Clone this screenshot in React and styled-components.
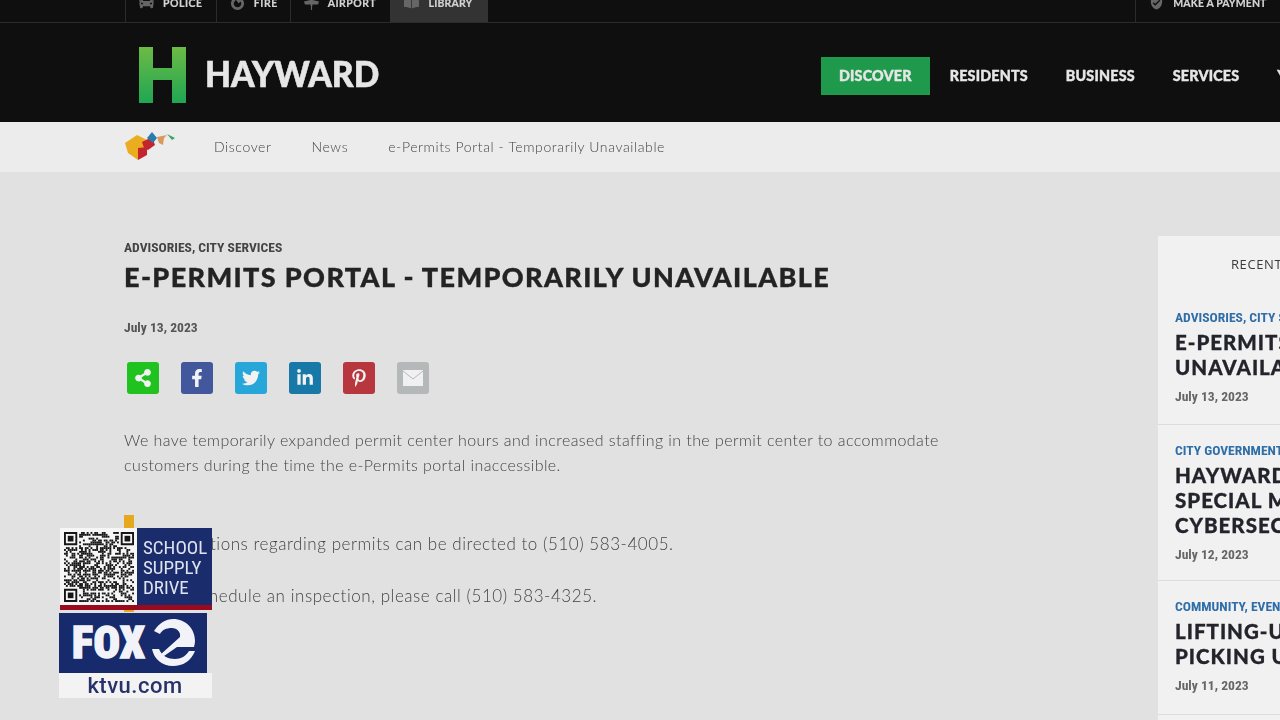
import React from "react";
import styled, { createGlobalStyle } from "styled-components";
import { FaShareAlt, FaFacebookF, FaTwitter, FaLinkedinIn, FaPinterestP, FaCar, FaBookOpen, FaFireAlt } from "react-icons/fa";
import { MdVerifiedUser } from "react-icons/md";

const Global = createGlobalStyle`
  html, body { margin: 0; padding: 0; height: 720px; overflow: hidden; background: #e1e1e1; }
  * { box-sizing: border-box; }
`;

const condensed = `"Roboto Condensed", "Liberation Sans Narrow", Roboto, sans-serif`;

const Page = styled.div`
  position: relative; width: 1280px; height: 720px; overflow: hidden;
  background: #e1e1e1; font-family: Lato, "Open Sans", sans-serif;
`;
const Site = styled.div`filter: blur(0.45px);`;

const TopBar = styled.div`
  display: flex; height: 23px; padding-left: 125px; background: #0f0f0f; border-bottom: 1px solid #2b2b2b;
`;
const TopItem = styled.div`
  display: flex; align-items: center; gap: 9px; height: 22px; width: ${p => p.$w}px; padding: 0 0 17px 13px;
  border-left: 1px solid ${p => (p.$active ? "transparent" : "#2b2b2b")};
  background: ${p => (p.$active ? "#333" : "transparent")};
  color: #d4d4d4; font-size: 10.5px; font-weight: 700; letter-spacing: ${p => p.$ls ?? 0.5}px; white-space: nowrap;
  -webkit-text-stroke: 0.2px #d4d4d4;
  svg { width: 15px; height: 15px; color: #666; flex: none; }
`;
const TopSpacer = styled.div`flex: 0 0 647px;`;

const Header = styled.header`
  display: flex; align-items: center; height: 99px; padding-left: 139px; background: #0f0f0f;
`;
const Brand = styled.div`
  display: flex; align-items: center; gap: 19px; flex: 0 0 682px; padding-top: 4px;
`;
const Word = styled.span`
  color: #e6e6e6; font-size: 36px; font-weight: 900; letter-spacing: 0; line-height: 1; margin-top: -3px;
  -webkit-text-stroke: 0.6px #e6e6e6; display: inline-block; transform: scaleX(0.935); transform-origin: left center;
`;
const Nav = styled.nav`
  display: flex; align-items: center; gap: 2px; flex: none; margin-top: 7px;
`;
const NavLink = styled.a`
  display: block; height: 38px; line-height: 38px; padding: 0 18px;
  background: ${p => (p.$active ? "#1f9a4d" : "transparent")};
  color: #e6e6e6; font-size: 14.3px; font-weight: 900; letter-spacing: 0.2px; white-space: nowrap;
  -webkit-text-stroke: 0.4px #e6e6e6;
`;

const Crumbs = styled.div`
  display: flex; align-items: center; height: 50px; padding: 0 0 1px 125px; background: #ececec;
  font-size: 14px; font-weight: 300; letter-spacing: 0.6px; color: #444;
`;
const CrumbArt = styled.svg`width: 52px; height: 32px; margin-right: 37px; flex: none;`;
const Crumb = styled.span`margin-right: 40px; white-space: nowrap;`;

const Body = styled.div`display: flex; padding-top: 64px; height: 548px;`;
const Main = styled.main`flex: 0 0 1158px; min-width: 0; padding: 3px 0 0 124px;`;
const Category = styled.div`
  font-family: ${condensed}; font-stretch: 75%;
  font-size: 13.6px; font-weight: 700; color: #444; line-height: 16px; white-space: nowrap;
`;
const Title = styled.h1`
  margin: 5px 0 0; font-size: 27px; line-height: 34px; font-weight: 900; color: #232323;
  letter-spacing: 1.38px; white-space: nowrap; -webkit-text-stroke: 0.35px #232323;
`;
const DateLine = styled.div`
  margin-top: 25px; font-family: ${condensed}; font-stretch: 75%;
  font-size: 13.6px; font-weight: 700; color: #555; line-height: 16px;
`;
const Share = styled.div`display: flex; gap: 22px; margin: 27px 0 0 3px;`;
const ShareBtn = styled.a`
  display: flex; align-items: center; justify-content: center; width: 32px; height: 32px; border-radius: 3px;
  background: ${p => p.$bg}; color: #f2f2f2; font-size: 18px;
`;
const Para = styled.p`
  margin: 33px 0 0; width: 830px; font-size: 16px; line-height: 25px; color: #444; letter-spacing: 0.42px; font-weight: 300;
`;
const List = styled.ul`
  position: relative; list-style: none; margin: 54px 0 0; padding: 0; width: 830px;
  &::before { content: ""; position: absolute; left: 0; top: -16px; width: 10px; height: 97px; background: #e6a81f; }
`;
const Item = styled.li`
  margin-bottom: 27px; padding-left: 45px; font-size: 17px; line-height: 25px; color: #444; letter-spacing: 0.55px; font-weight: 300; white-space: nowrap;
`;

const Side = styled.aside`flex: 0 0 330px; background: #f1f1f1; height: 484px;`;
const SideHead = styled.div`
  height: 62px; padding: 20px 0 0 73px; font-size: 13px; line-height: 16px; color: #3a3a3a; letter-spacing: 0.6px;
  font-family: "Open Sans", sans-serif; white-space: nowrap;
`;
const Card = styled.article`
  height: ${p => p.$h}px; padding: ${p => p.$pt}px 0 0 17px; border-bottom: 1px solid #dcdcdc; white-space: nowrap;
`;
const CardCat = styled.div`
  font-family: ${condensed}; font-stretch: 75%;
  font-size: 13.6px; font-weight: 700; line-height: 16px; color: #2f6ea8;
`;
const CardTitle = styled.div`
  margin-top: 5px; font-size: 20.5px; line-height: 25px; font-weight: 900; color: #23232b; letter-spacing: 1px;
  -webkit-text-stroke: 0.3px #23232b;
`;
const CardDate = styled.div`
  margin-top: 8px; font-family: ${condensed}; font-stretch: 75%;
  font-size: 13.6px; font-weight: 700; line-height: 16px; color: #666;
`;

const Promo = styled.div`position: absolute; left: 59px; top: 528px; width: 153px;`;
const QrBox = styled.div`display: flex; margin-left: 1px; height: 77px;`;
const QrWhite = styled.div`flex: 0 0 77px; background: #f6f6f6; padding: 4px 3px 4px 4px;`;
const QrSvg = styled.svg`display: block; width: 70px; height: 70px;`;
const Drive = styled.div`
  flex: 1; min-width: 0; background: #1a2c6b; color: #dfe3ef; padding: 10px 0 0 6px;
  font-family: ${condensed}; font-stretch: 75%; font-size: 19px; line-height: 20px; white-space: nowrap;
`;
const RedLine = styled.div`height: 5px; margin-left: 1px; background: #9a0a1e;`;
const Fox = styled.div`
  position: relative; width: 148px; height: 60px; margin-top: 3px; padding: 7px 0 0 13px; background: #172a6b;
`;
const FoxText = styled.span`
  font-family: ${condensed}; font-stretch: 75%; font-weight: 900; font-size: 44px; color: #f1f3f8; line-height: 46px;
  -webkit-text-stroke: 1.5px #f1f3f8; letter-spacing: 0.5px;
`;
const FoxTwo = styled.svg`position: absolute; left: 91px; top: 5px; width: 46px; height: 49px;`;
const Ktvu = styled.div`
  height: 25px; background: #f3f3f3; color: #27326a; text-align: center; padding-right: 1px;
  font-family: Roboto, "Liberation Sans", sans-serif; font-size: 22px; line-height: 26px; font-weight: 500; letter-spacing: 0.5px;
`;

const QR_N = 37;
function qrCells() {
  const n = QR_N; const out = [];
  const inF = (x, y, fx, fy) => x >= fx - 1 && x <= fx + 7 && y >= fy - 1 && y <= fy + 7;
  let s = 12345;
  for (let y = 0; y < n; y++) for (let x = 0; x < n; x++) {
    s = (s * 1103515245 + 12345) & 0x7fffffff;
    if (inF(x, y, 0, 0) || inF(x, y, n - 7, 0) || inF(x, y, 0, n - 7)) continue;
    if ((s >> 16) % 100 < 50) out.push([x, y]);
  }
  return out;
}
const Finder = ({ x, y }) => (
  <g>
    <path d={`M${x} ${y}h7v7h-7z M${x + 1} ${y + 1}v5h5v-5z`} fillRule="evenodd" />
    <rect x={x + 2} y={y + 2} width="3" height="3" />
  </g>
);
const Qr = () => (
  <QrSvg viewBox={`0 0 ${QR_N} ${QR_N}`} fill="#161616">
    <Finder x={0} y={0} /><Finder x={QR_N - 7} y={0} /><Finder x={0} y={QR_N - 7} />
    {qrCells().map(([x, y]) => <rect key={x + "-" + y} x={x} y={y} width="1" height="1" />)}
  </QrSvg>
);
const TowerIcon = () => (
  <svg viewBox="0 0 16 16" fill="currentColor">
    <path d="M0 7l8-2 8 2-1 3H9l-.4 3v3H7.400v-3L7 10H1z" />
  </svg>
);

const tops = [
  { w: 91, icon: <FaCar />, label: "POLICE" },
  { w: 74, icon: <FaFireAlt />, label: "FIRE" },
  { w: 101, icon: <TowerIcon />, label: "AIRPORT" },
  { w: 98, icon: <FaBookOpen />, label: "LIBRARY", active: true, ls: 0.2 },
];
const cards = [
  { h: 127, pt: 11, cat: "ADVISORIES, CITY SERVICES", t: ["E-PERMITS PORTAL - TEMPORARILY", "UNAVAILABLE"], d: "July 13, 2023" },
  { h: 156, pt: 17, cat: "CITY GOVERNMENT, NEWS", t: ["HAYWARD CITY COUNCIL", "SPECIAL MEETING ON", "CYBERSECURITY"], d: "July 12, 2023" },
  { h: 134, pt: 17, cat: "COMMUNITY, EVENTS", t: ["LIFTING-UP HAYWARD:", "PICKING UP LITTER"], d: "July 11, 2023" },
];

export default function App() {
  return (
    <Page>
      <Global />
      <Site>
        <TopBar>
          {tops.map(t => (
            <TopItem key={t.label} $w={t.w} $active={t.active} $ls={t.ls}>{t.icon}{t.label}</TopItem>
          ))}
          <TopSpacer />
          <TopItem $w={145} $ls={0.1}><MdVerifiedUser />MAKE A PAYMENT</TopItem>
        </TopBar>
        <Header>
          <Brand>
            <svg width="47" height="56" viewBox="0 0 47 56">
              <defs>
                <linearGradient id="hg" x1="0" y1="0" x2="0" y2="1">
                  <stop offset="0" stopColor="#6cbb45" />
                  <stop offset="1" stopColor="#1fa653" />
                </linearGradient>
              </defs>
              <path fill="url(#hg)" d="M0 0h14v21h19V0h14v56H33V33H14v23H0z" />
            </svg>
            <Word>HAYWARD</Word>
          </Brand>
          <Nav>
            <NavLink $active>DISCOVER</NavLink>
            <NavLink>RESIDENTS</NavLink>
            <NavLink>BUSINESS</NavLink>
            <NavLink>SERVICES</NavLink>
            <NavLink>YOUR CITY HALL</NavLink>
          </Nav>
        </Header>
        <Crumbs>
          <CrumbArt viewBox="0 0 52 32">
            <path fill="#e9ad1f" d="M0 12L12 4l10 5-9 20-10-7z" />
            <path fill="#c3242e" d="M13 17l9-1v8l-9 5z" />
            <path fill="#c3242e" d="M17 11l10-5 3 8-7 5-4-2z" />
            <path fill="#2a7ab0" d="M22 7l5-6 5 6-4 5z" />
            <path fill="#d9995b" d="M32 6l10-2-3 3-1 7-4-2z" />
            <path fill="#3aa55b" d="M42 3l8 4-3 2z" />
          </CrumbArt>
          <Crumb>Discover</Crumb>
          <Crumb>News</Crumb>
          <Crumb>e-Permits Portal - Temporarily Unavailable</Crumb>
        </Crumbs>
        <Body>
          <Main>
            <Category>ADVISORIES, CITY SERVICES</Category>
            <Title>E-PERMITS PORTAL - TEMPORARILY UNAVAILABLE</Title>
            <DateLine>July 13, 2023</DateLine>
            <Share>
              <ShareBtn $bg="#1fc21f"><FaShareAlt /></ShareBtn>
              <ShareBtn $bg="#43589c"><FaFacebookF /></ShareBtn>
              <ShareBtn $bg="#27a6da"><FaTwitter /></ShareBtn>
              <ShareBtn $bg="#1878a8"><FaLinkedinIn /></ShareBtn>
              <ShareBtn $bg="#b8373f"><FaPinterestP /></ShareBtn>
              <ShareBtn $bg="#b5b8b8">
                <svg width="20" height="16" viewBox="0 0 20 16">
                  <rect width="20" height="16" fill="#f0f0f0" />
                  <path d="M0 1l10 8 10-8" fill="none" stroke="#b5b8b8" strokeWidth="1" />
                </svg>
              </ShareBtn>
            </Share>
            <Para>We have temporarily expanded permit center hours and increased staffing in the permit center to accommodate customers during the time the e-Permits portal inaccessible.</Para>
            <List>
              <Item>Questions regarding permits can be directed to (510) 583-4005.</Item>
              <Item>To schedule an inspection, please call (510) 583-4325.</Item>
            </List>
          </Main>
          <Side>
            <SideHead>RECENT NEWS</SideHead>
            {cards.map(c => (
              <Card key={c.d} $h={c.h} $pt={c.pt}>
                <CardCat>{c.cat}</CardCat>
                <CardTitle>{c.t.map(l => <div key={l}>{l}</div>)}</CardTitle>
                <CardDate>{c.d}</CardDate>
              </Card>
            ))}
          </Side>
        </Body>
      </Site>
      <Promo>
        <QrBox>
          <QrWhite><Qr /></QrWhite>
          <Drive>SCHOOL<br />SUPPLY<br />DRIVE</Drive>
        </QrBox>
        <RedLine />
        <Fox>
          <FoxText>FOX</FoxText>
          <FoxTwo viewBox="0 0 46 49" fill="#f1f3f8">
            <path d="M4 13C9 5 16 1 23 1c13 0 22 10 22 22 0 2-.5 4-1 6H27L14 38l-4-1 20-18c1-5-3-9-8-9-6 0-10 2-12 6z" />
            <path d="M2 31h7c3 7 9 10 16 10 6 0 11-3 14-8h6c-4 10-12 15-22 15C12 48 4 41 2 31z" />
          </FoxTwo>
        </Fox>
        <Ktvu>ktvu.com</Ktvu>
      </Promo>
    </Page>
  );
}
